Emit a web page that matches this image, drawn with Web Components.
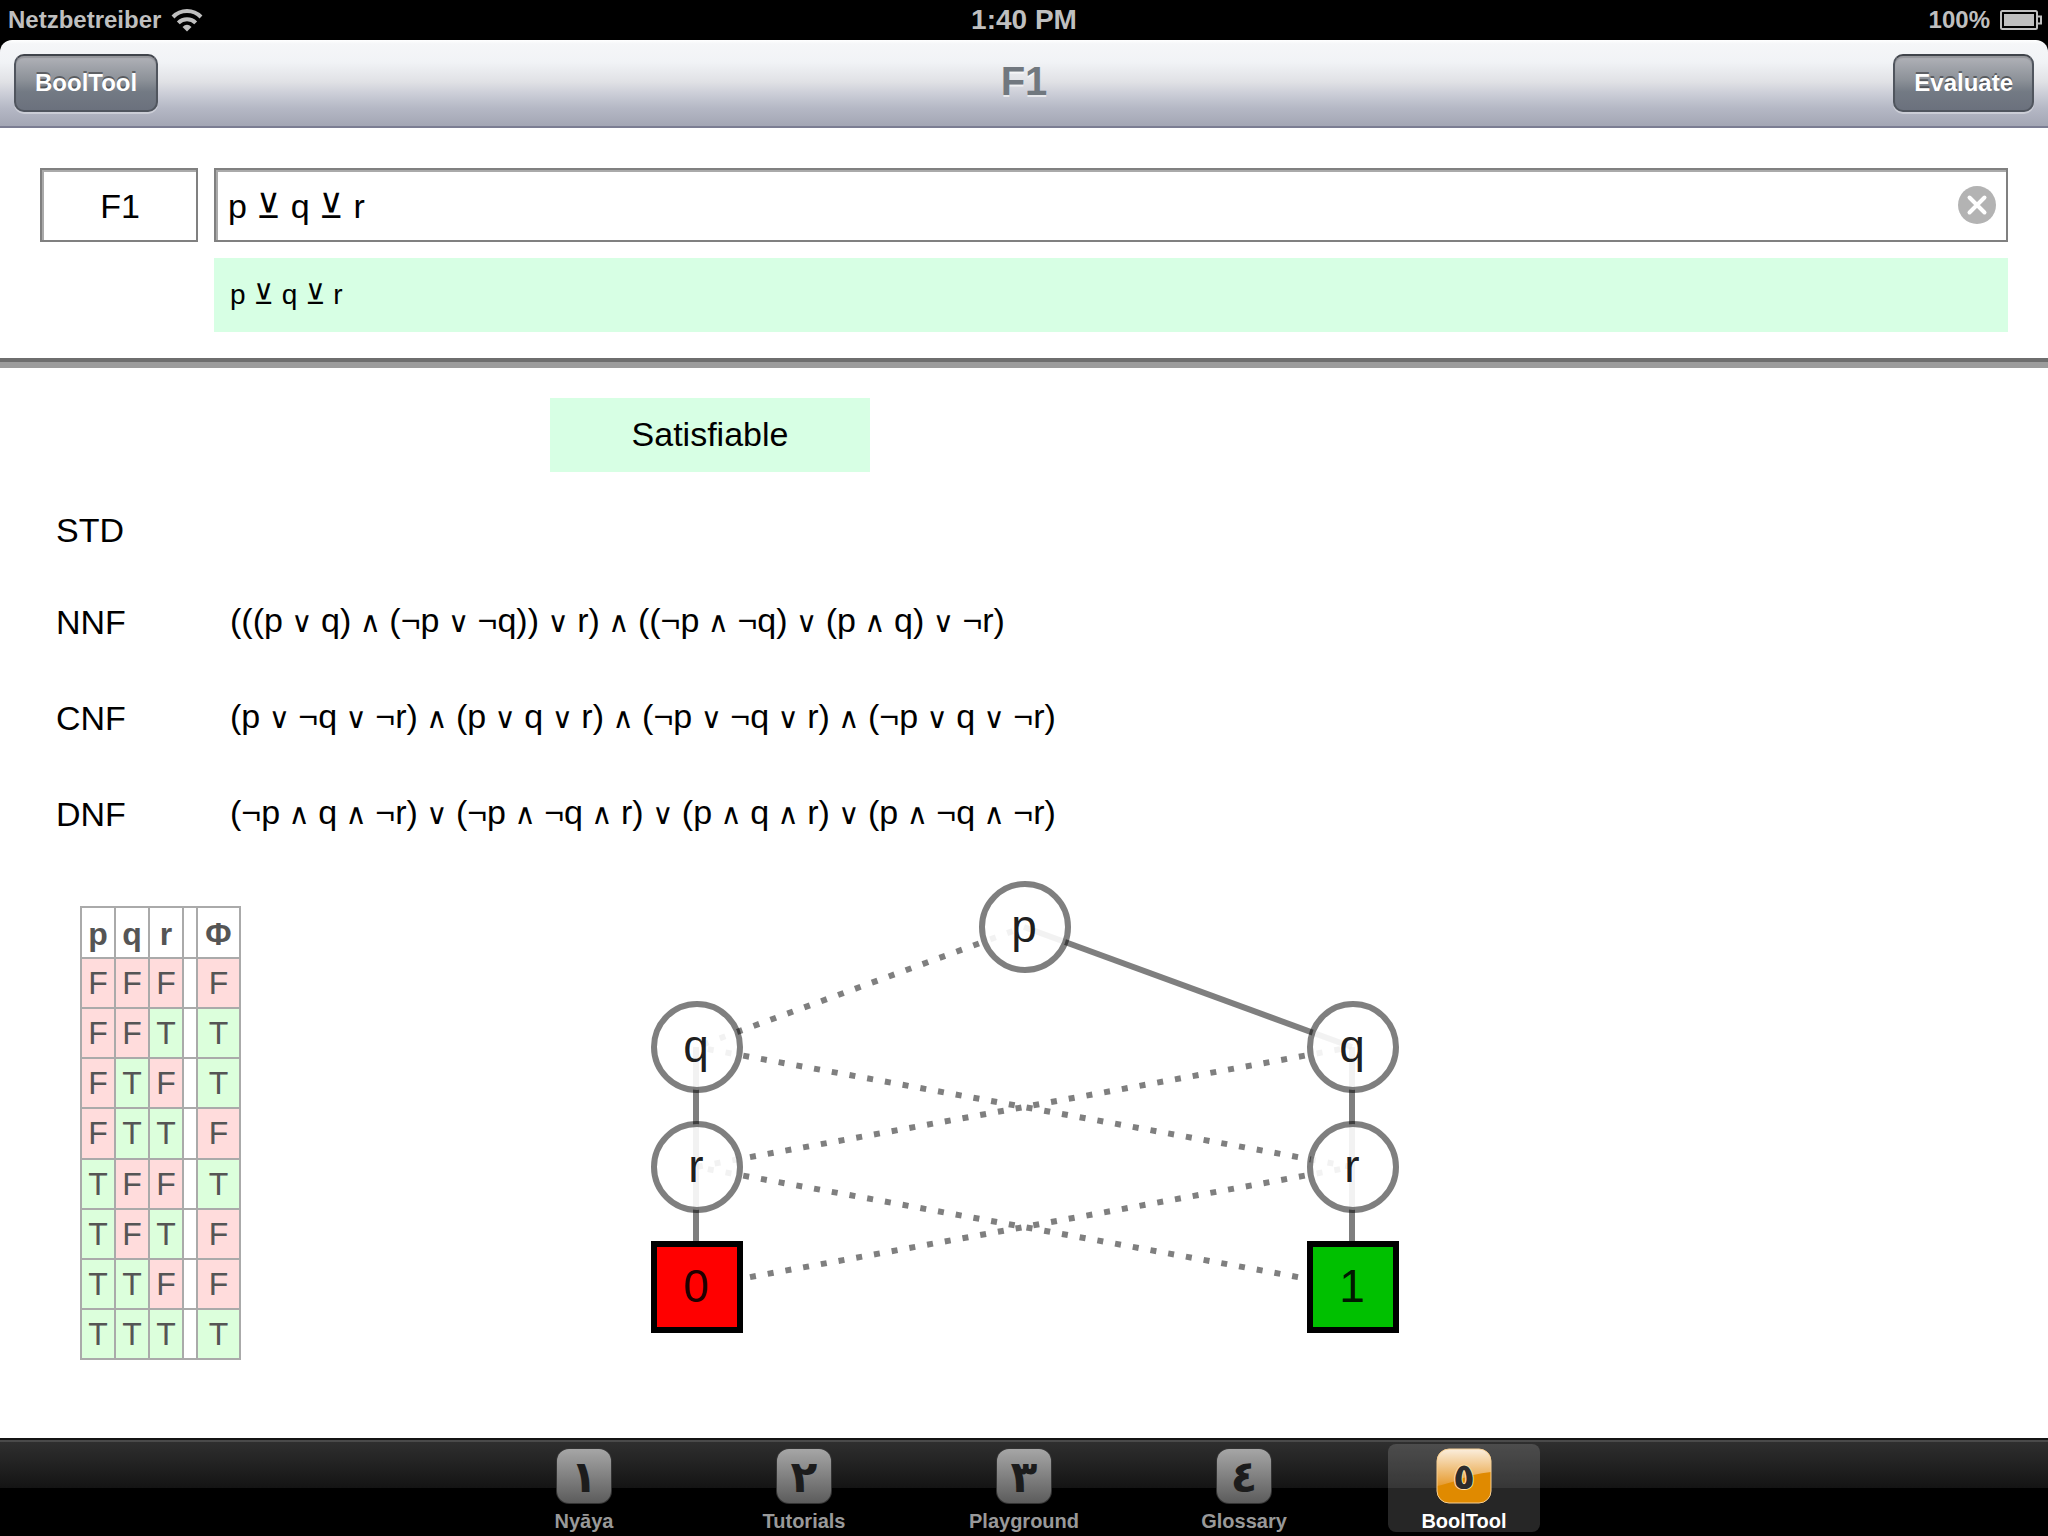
<!DOCTYPE html>
<html lang="en">
<head>
<meta charset="utf-8">
<title>BoolTool</title>
<style>
html, body { height: 100%; }
body { margin: 0; background: #000; color: #000; font-family: "Liberation Sans", "DejaVu Sans", sans-serif; }
</style>
</head>
<body>
<bool-app></bool-app>

<script>
class Base extends HTMLElement {
  constructor() {
    super();
    this.attachShadow({ mode: 'open' });
  }
  connectedCallback() {
    this.shadowRoot.innerHTML = this.view();
  }
}

customElements.define('status-bar', class extends Base {
  view() {
    return `<style>
      :host { display: grid; grid-template-columns: 1fr auto 1fr; align-items: center; height: 40px; flex: none; background: #000; color: #bfbfbf; font-weight: bold; font-size: 24px; line-height: 40px; }
      .left, .right { display: flex; align-items: center; gap: 10px; padding: 0 6px 0 8px; }
      .right { justify-content: flex-end; }
      .time { font-size: 28px; }
      svg { display: block; }
    </style>
    <div class="left"><span>Netzbetreiber</span>
      <svg width="32" height="24" viewBox="0 0 32 24" fill="none" stroke="#bfbfbf" stroke-width="4">
        <path d="M2 9a19.500 19.500 0 0 1 28 0"/><path d="M7.300 14.800a12.300 12.300 0 0 1 17.400 0"/>
        <path d="M11.500 19Q16 14.500 20.500 19L16 23.500Z" fill="#bfbfbf" stroke="none"/>
      </svg></div>
    <div class="time">1:40 PM</div>
    <div class="right"><span>100%</span>
      <svg width="42" height="20" viewBox="0 0 42 20">
        <rect x="1" y="1" width="36" height="18" rx="1.500" fill="none" stroke="#bfbfbf" stroke-width="2"/>
        <rect x="4" y="4" width="30" height="12" fill="#bfbfbf"/>
        <path d="M38 6.500h3v7h-3" fill="none" stroke="#bfbfbf" stroke-width="2"/>
      </svg></div>`;
  }
});

customElements.define('bar-button', class extends Base {
  view() {
    return `<style>
      :host { display: block; }
      button { display: block; box-sizing: border-box; height: 58px; padding: 0 19px; border: 2px solid; border-color: #40444b #50555e #50555e; border-radius: 10px;
        font: bold 24px "Liberation Sans", sans-serif; color: #fff; text-shadow: 0 -2px 0 rgba(0,0,0,.4);
        background: linear-gradient(#b4b5bb, #8c9198 45%, #737a84 65%, #6a707c) border-box; box-shadow: 0 2px 0 rgba(255,255,255,.35), inset 0 2px 1px rgba(0,0,0,.15); }
    </style><button type="button"><slot></slot></button>`;
  }
});

customElements.define('nav-bar', class extends Base {
  view() {
    return `<style>
      :host { display: grid; grid-template-columns: 1fr auto 1fr; align-items: center; box-sizing: border-box; height: 88px; flex: none; padding: 0 14px; border-bottom: 2px solid #7b7d92; border-radius: 12px 12px 0 0;
        background: linear-gradient(#fff 0, #f5f6f8 4px, #f1f3f6 22px, #e0e1e5 42px, #cbcdd7 54px, #b5b8c5 68px, #a3a6b4 86px); }
      h1 { margin: 0; padding-bottom: 4px; font-size: 40px; line-height: 44px; color: #71787f; text-shadow: 0 2px 0 rgba(255,255,255,.6); }
      .end { justify-self: end; }
      .start { justify-self: start; }
    </style>
    <bar-button class="start">BoolTool</bar-button><h1>F1</h1><bar-button class="end">Evaluate</bar-button>`;
  }
});

customElements.define('formula-editor', class extends Base {
  view() {
    return `<style>
      :host { display: grid; grid-template-columns: 158px 1fr; gap: 16px; padding: 40px 40px 26px; }
      .box { display: flex; align-items: center; box-sizing: border-box; height: 74px; min-width: 0; border: 2px solid #808080; box-shadow: inset 2px 2px 0 #aaa; padding: 0 10px 0 12px; }
      input { flex: 1; width: 100%; min-width: 0; border: 0; outline: 0; padding: 2px 0 0; margin: 0; background: none; color: #000; font: 34px "Liberation Sans", "DejaVu Sans", sans-serif; }
      .name input { text-align: center; }
      button { flex: none; padding: 0; border: 0; background: none; }
      svg { display: block; }
      output { grid-column: 2; display: flex; align-items: center; box-sizing: border-box; height: 74px; padding: 0 16px 2px; background: #d7ffe4; font-size: 28px; }
    </style>
    <div class="box name"><input aria-label="Name" value="F1"></div>
    <div class="box"><input id="formula" aria-label="Formula" value="p ⊻ q ⊻ r">
      <button type="button" aria-label="Clear"><svg width="38" height="38" viewBox="0 0 38 38"><circle cx="19" cy="19" r="19" fill="#b3b3b3"/><path d="M11.500 11.500l15 15m0-15l-15 15" stroke="#fff" stroke-width="4" stroke-linecap="round"/></svg></button></div>
    <output for="formula">p ⊻ q ⊻ r</output>`;
  }
});

customElements.define('normal-forms', class extends Base {
  view() {
    const rows = [
      ['STD', ''],
      ['NNF', '(((p ∨ q) ∧ (¬p ∨ ¬q)) ∨ r) ∧ ((¬p ∧ ¬q) ∨ (p ∧ q) ∨ ¬r)'],
      ['CNF', '(p ∨ ¬q ∨ ¬r) ∧ (p ∨ q ∨ r) ∧ (¬p ∨ ¬q ∨ r) ∧ (¬p ∨ q ∨ ¬r)'],
      ['DNF', '(¬p ∧ q ∧ ¬r) ∨ (¬p ∧ ¬q ∧ r) ∨ (p ∧ q ∧ r) ∨ (p ∧ ¬q ∧ ¬r)']
    ];
    const mark = s => s.replace(/[∨∧]/g, '<span>$&</span>');
    return `<style>
      :host { display: block; font-size: 34px; line-height: 40px; }
      .badge { display: flex; align-items: center; justify-content: center; box-sizing: border-box; width: 320px; height: 74px; margin: 0 0 14px 550px; padding-bottom: 2px; background: #d7ffe4; }
      dl { display: grid; grid-template-columns: 174px 1fr; grid-template-rows: 89px; grid-auto-rows: 96px; align-items: center; margin: 0 0 0 56px; }
      dt { padding-bottom: 2px; }
      dd { margin: 0; padding-bottom: 6px; white-space: nowrap; }
      span { margin: 0 -1px; font: 29px/32px "DejaVu Sans", sans-serif; }
    </style>
    <div class="badge">Satisfiable</div>
    <dl>${rows.map(([k, v]) => `<dt>${k}</dt><dd>${mark(v)}</dd>`).join('')}</dl>`;
  }
});

customElements.define('truth-table', class extends Base {
  view() {
    const rows = ['FFFF', 'FFTT', 'FTFT', 'FTTF', 'TFFT', 'TFTF', 'TTFF', 'TTTT'];
    const cell = c => `<td class="${c}">${c}</td>`;
    return `<style>
      :host { display: block; }
      table { border-collapse: collapse; table-layout: fixed; width: 161px; height: 454px; font-size: 32px; line-height: 36px; color: #555; }
      thead tr { height: 51px; }
      th { padding: 0; padding-top: 2px; }
      td { padding: 0; }
      th, td { border: 2px solid #aaa; text-align: center; }
      .F { background: #ffdcdc; }
      .T { background: #dcffdc; }
      .v { width: 34px; }
      .gap { width: 14px; }
    </style>
    <table><colgroup><col class="v"><col class="v"><col class="v"><col class="gap"><col></colgroup>
      <thead><tr><th>p</th><th>q</th><th>r</th><th></th><th>Φ</th></tr></thead>
      <tbody>${rows.map(r => `<tr>${cell(r[0])}${cell(r[1])}${cell(r[2])}<td></td>${cell(r[3])}</tr>`).join('')}</tbody>
    </table>`;
  }
});

customElements.define('decision-diagram', class extends Base {
  view() {
    const L = 45, M = 373, R = 701, Y = [64, 184, 304, 424];
    const solid = [[M, 0, R, 1], [L, 1, L, 2], [R, 1, R, 2], [L, 2, L, 3], [R, 2, R, 3]];
    const dotted = [[M, 0, L, 1], [L, 1, R, 2], [R, 1, L, 2], [L, 2, R, 3], [R, 2, L, 3]];
    const line = ([a, b, c, d]) => `<line x1="${a}" y1="${Y[b]}" x2="${c}" y2="${Y[d]}"/>`;
    const nodes = [[M, 0, 'p'], [L, 1, 'q'], [R, 1, 'q'], [L, 2, 'r'], [R, 2, 'r']];
    return `<style>
      :host { display: block; }
      svg { display: block; }
      line { stroke: rgba(0,0,0,.5); stroke-width: 6; }
      .dotted line { stroke-dasharray: 6 12; stroke-dashoffset: -12; }
      circle { fill: rgba(255,255,255,.9); stroke: rgba(0,0,0,.5); stroke-width: 6; }
      rect { stroke: #000; stroke-width: 6; }
      text { font-size: 46px; text-anchor: middle; fill: rgba(0,0,0,.9); }
    </style>
    <svg width="750" height="472" viewBox="0 0 750 472" role="img" aria-label="Binary decision diagram">
      <g>${solid.map(line).join('')}</g>
      <g class="dotted">${dotted.map(line).join('')}</g>
      ${nodes.map(([x, y, t]) => `<circle cx="${x + 1}" cy="${Y[y]}" r="43"/><text x="${x}" y="${Y[y] + 15}">${t}</text>`).join('')}
      <rect x="${L - 42}" y="381" width="86" height="86" fill="#f00"/><text x="${L}" y="439">0</text>
      <rect x="${R - 42}" y="381" width="86" height="86" fill="#00c000"/><text x="${R}" y="439">1</text>
    </svg>`;
  }
});

customElements.define('tab-item', class extends Base {
  view() {
    const on = this.hasAttribute('selected');
    return `<style>
      :host { display: block; width: 152px; }
      a { display: flex; flex-direction: column; align-items: center; box-sizing: border-box; height: 88px; padding-top: 4px; border-radius: 8px; text-decoration: none; color: #999; font-weight: bold; font-size: 20px; line-height: 24px; }
      a.on { background: rgba(255,255,255,.15); color: #fff; }
      svg { display: block; margin-bottom: 5px; overflow: visible; }
      text { font: bold 44px "DejaVu Sans", sans-serif; text-anchor: middle; fill: #1c1c1c; }
      .on text { font-size: 36px; fill: #2c2c2c; stroke: #ffe0a8; stroke-width: 2; paint-order: stroke; }
    </style>
    <a href="#" class="${on ? 'on' : ''}"><svg width="56" height="56" viewBox="0 0 56 56" aria-hidden="true">
      <defs><linearGradient id="g" x2="0" y2="1"><stop stop-color="#a6a6a6"/><stop offset="1" stop-color="#5c5c5c"/></linearGradient>
      <linearGradient id="h" x2="0" y2="1"><stop stop-color="#fbeedd"/><stop offset="1" stop-color="#e69a2c"/></linearGradient></defs>
      ${on ? `<rect x="1" y="1" width="54" height="54" rx="12" fill="#e08a00"/>
        <path d="M1 38V13A12 12 0 0 1 13 1H43A12 12 0 0 1 55 13V24Q36 26 22 32Q10 36 1 38Z" fill="url(#h)"/>
        <rect x="1" y="1" width="54" height="54" rx="12" fill="none" stroke="#f6cf94" stroke-width="1"/>`
      : `<rect width="56" height="56" rx="13" fill="#333"/><rect x="1" y="1" width="54" height="54" rx="12" fill="url(#g)"/>`}
      <text x="28" y="${on ? 41 : 44}">${this.getAttribute('digit')}</text>
    </svg><slot></slot></a>`;
  }
});

customElements.define('tab-bar', class extends Base {
  view() {
    return `<style>
      :host { display: block; flex: none; }
      nav { display: flex; justify-content: center; gap: 68px; box-sizing: border-box; height: 98px; padding-top: 6px; background: linear-gradient(#141414 0 2px, #4a4a4a 2px 4px, #2f2f2f 4px, #141414 50px, #000 50px); }
    </style>
    <nav><tab-item digit="١">Nyāya</tab-item><tab-item digit="٢">Tutorials</tab-item><tab-item digit="٣">Playground</tab-item><tab-item digit="٤">Glossary</tab-item><tab-item digit="٥" selected>BoolTool</tab-item></nav>`;
  }
});

customElements.define('bool-app', class extends Base {
  view() {
    return `<style>
      :host { display: flex; flex-direction: column; min-height: 100%; }
      main { flex: 1; background: #fff; }
      hr { height: 6px; margin: 0; border: 0; border-top: 4px solid #6e6e6e; background: #9c9c9c; }
      normal-forms { padding-top: 30px; }
      .views { display: flex; align-items: flex-start; gap: 410px; padding-left: 80px; }
      truth-table { padding-top: 43px; }
    </style>
    <status-bar></status-bar>
    <nav-bar></nav-bar>
    <main>
      <formula-editor></formula-editor>
      <hr>
      <normal-forms></normal-forms>
      <div class="views"><truth-table></truth-table><decision-diagram></decision-diagram></div>
    </main>
    <tab-bar></tab-bar>`;
  }
});
</script>
</body>
</html>
